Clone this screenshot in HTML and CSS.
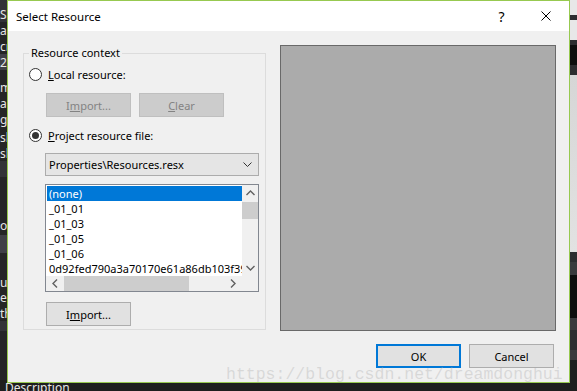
FILE: index.html
```html
<!DOCTYPE html>
<html lang="en">
<head>
  <meta charset="UTF-8">
  <meta name="viewport" content="width=device-width, initial-scale=1.0">
  <title>Select Resource</title>
  <link rel="stylesheet" href="styles.css">
</head>
<body>
  <div class="desktop">
    <!-- editor behind the dialog -->
    <div class="vs-left">
      <div class="vs-row shade" style="height: 6px"></div>
      <div class="vs-row shade" style="height: 16px">S</div>
      <div class="vs-row" style="height: 17px">al</div>
      <div class="vs-row" style="height: 15px">cr</div>
      <div class="vs-row hover" style="height: 16px">2</div>
      <div class="vs-row" style="height: 9px"></div>
      <div class="vs-row" style="height: 16px">m</div>
      <div class="vs-row" style="height: 16px">a</div>
      <div class="vs-row" style="height: 17px">g</div>
      <div class="vs-row" style="height: 18px">sk</div>
      <div class="vs-row" style="height: 15px">sk</div>
      <div class="vs-row shade" style="height: 16px"></div>
      <div class="vs-row" style="height: 40px"></div>
      <div class="vs-row" style="height: 16px">oi</div>
      <div class="vs-row" style="height: 2px"></div>
      <div class="vs-row hover" style="height: 18px"></div>
      <div class="vs-row" style="height: 21px"></div>
      <div class="vs-row" style="height: 16px">us</div>
      <div class="vs-row" style="height: 15px">e</div>
      <div class="vs-row" style="height: 16px">th</div>
      <div class="vs-row shade" style="height: 10px"></div>
    </div>
    <div class="vs-mid"></div>
    <div class="vs-right">
      <div class="band light" style="height: 15px"></div>
      <div class="band dark" style="height: 5px"></div>
      <div class="band light" style="height: 20px"></div>
      <div class="band dark" style="height: 5px"></div>
      <div class="band black" style="height: 20px"></div>
      <div class="band dark" style="height: 10px"></div>
      <div class="band pale" style="height: 177px"></div>
      <div class="band dark" style="height: 10px"></div>
      <div class="band grey" style="height: 13px"></div>
      <div class="band black" style="height: 43px"></div>
      <div class="band grey" style="height: 12px"></div>
      <div class="band dark" style="height: 20px"></div>
      <div class="band grey" style="height: 10px"></div>
    </div>
    <div class="vs-status">Description</div>

    <div class="dialog">
      <div class="titlebar">
        <span class="title">Select Resource</span>
        <span class="caption-btn help">?</span>
        <span class="caption-btn close">
          <svg width="10" height="10" viewBox="0 0 10 10"><path d="M0.5 0.5 L9.5 9.5 M9.5 0.5 L0.5 9.5" stroke="#000" stroke-width="1" fill="none"/></svg>
        </span>
      </div>

      <div class="dialog-body">
        <div class="main">
          <fieldset class="group">
            <legend>Resource context</legend>

            <div class="radio first">
              <span class="circle"></span>
              <span><u>L</u>ocal resource:</span>
            </div>
            <div class="btn-row">
              <button class="btn" disabled>I<u>m</u>port...</button>
              <button class="btn" disabled><u>C</u>lear</button>
            </div>

            <div class="radio checked">
              <span class="circle"></span>
              <span><u>P</u>roject resource file:</span>
            </div>
            <div class="combo">
              <span>Properties\Resources.resx</span>
              <svg width="9" height="6" viewBox="0 0 9 6"><path d="M0.5 0.5 L4.5 4.5 L8.5 0.5" stroke="#333" fill="none"/></svg>
            </div>

            <div class="listbox">
              <ul class="items">
                <li class="selected">(none)</li>
                <li>_01_01</li>
                <li>_01_03</li>
                <li>_01_05</li>
                <li>_01_06</li>
                <li>0d92fed790a3a70170e61a86db103f39</li>
              </ul>
              <div class="vscroll">
                <svg class="arrow" width="9" height="6" viewBox="0 0 9 6"><path d="M0.5 5 L4.5 1 L8.5 5" stroke="#606060" stroke-width="1.4" fill="none"/></svg>
                <div class="vthumb"></div>
                <svg class="arrow down" width="9" height="6" viewBox="0 0 9 6"><path d="M0.5 1 L4.5 5 L8.5 1" stroke="#606060" stroke-width="1.4" fill="none"/></svg>
              </div>
              <div class="hscroll">
                <svg class="arrow" width="6" height="9" viewBox="0 0 6 9"><path d="M5 0.5 L1 4.5 L5 8.5" stroke="#606060" stroke-width="1.4" fill="none"/></svg>
                <div class="hthumb"></div>
                <svg class="arrow right" width="6" height="9" viewBox="0 0 6 9"><path d="M1 0.5 L5 4.5 L1 8.5" stroke="#606060" stroke-width="1.4" fill="none"/></svg>
              </div>
              <div class="corner"></div>
            </div>

            <button class="btn import">I<u>m</u>port...</button>
          </fieldset>

          <div class="preview"></div>
        </div>

        <div class="footer">
          <button class="btn default">OK</button>
          <button class="btn">Cancel</button>
        </div>
      </div>
    </div>

    <div class="watermark">https://blog.csdn.net/dreamdonghui</div>
  </div>
</body>
</html>
```

FILE: styles.css
```css
* {
  box-sizing: border-box;
}
html, body {
  margin: 0;
  padding: 0;
}
body {
  background-color: #1e1e1e;
  font-family: "Noto Sans", "Segoe UI", sans-serif;
  font-size: 11px;
  color: #000;
  overflow: hidden;
}
u {
  text-decoration: underline;
  text-underline-offset: 1px;
}

/* editor backdrop */
.desktop {
  position: relative;
  width: 577px;
  height: 391px;
  display: grid;
  grid-template-columns: 7px 1fr 7px;
  grid-template-rows: 383px 8px;
}
.vs-left {
  background-color: #252526;
  color: #e6e6e6;
  overflow: hidden;
  white-space: nowrap;
  display: flex;
  flex-direction: column;
}
.vs-row {
  flex: none;
  display: flex;
  align-items: center;
  font-size: 12px;
}
.vs-row.shade {
  background-color: #333337;
}
.vs-row.hover {
  background-color: #3f3f46;
}
.vs-mid {
  background-color: #1e1e1e;
}
.vs-right {
  display: flex;
  flex-direction: column;
  background-color: #1e1e1e;
}
.band {
  flex: none;
}
.band.light {
  background-color: #e8e8e8;
}
.band.pale {
  background: linear-gradient(#d6d6d6, #e2e2e2);
}
.band.dark {
  background-color: #2d2d30;
}
.band.grey {
  background-color: #3a3a3d;
}
.band.black {
  background-color: #0e0e0e;
}
.vs-status {
  grid-column: 1 / 4;
  background-color: #1e1e1e;
  color: #e6e6e6;
  font-size: 12px;
  padding-left: 5px;
  line-height: 16px;
  margin-top: -3px;
  overflow: hidden;
}

/* dialog window */
.dialog {
  position: absolute;
  left: 7px;
  top: 0;
  width: 563px;
  height: 383px;
  border: 1px solid #97c950;
  background-color: #f0f0f0;
  display: flex;
  flex-direction: column;
  z-index: 1;
}
.titlebar {
  height: 30px;
  flex: none;
  background-color: #fff;
  display: flex;
  align-items: center;
  padding-left: 8px;
}
.title {
  font-size: 11.5px;
}
.caption-btn {
  width: 46px;
  height: 30px;
  display: flex;
  align-items: center;
  justify-content: center;
}
.help {
  margin-left: auto;
  font-size: 14px;
  padding-left: 3px;
}

.dialog-body {
  flex: 1;
  display: flex;
  flex-direction: column;
}
.main {
  display: flex;
  align-items: flex-start;
  gap: 14px;
  padding: 14px 0 0 15px;
}

.group {
  width: 243px;
  margin: 0;
  padding: 0 6px 3px 5px;
  border: 1px solid #dcdcdc;
  min-width: 0;
}
.group legend {
  padding: 0 2px;
  line-height: 16px;
}

.radio {
  display: flex;
  align-items: center;
  gap: 6px;
  height: 16px;
  margin-top: 10px;
}
.radio.first {
  margin-top: 5px;
}
.circle {
  width: 13px;
  height: 13px;
  border: 1px solid #333;
  border-radius: 50%;
  background-color: #fff;
  display: flex;
  align-items: center;
  justify-content: center;
}
.radio.checked .circle::after {
  content: "";
  width: 7px;
  height: 7px;
  border-radius: 50%;
  background-color: #333;
}

.btn {
  width: 85px;
  height: 24px;
  padding: 0;
  font-family: inherit;
  font-size: 11px;
  color: #000;
  background-color: #e1e1e1;
  border: 1px solid #adadad;
  border-radius: 0;
}
.btn:disabled {
  background-color: #cccccc;
  border-color: #bfbfbf;
  color: #838383;
}
.btn.default {
  border: 2px solid #0078d7;
}
.btn-row {
  display: flex;
  gap: 8px;
  margin: 11px 0 0 17px;
}

.combo {
  width: 214px;
  height: 23px;
  margin: 10px 0 0 16px;
  background-color: #e5e5e5;
  border: 1px solid #acacac;
  display: flex;
  align-items: center;
  justify-content: space-between;
  padding: 0 6px 0 3px;
}

.listbox {
  width: 214px;
  height: 108px;
  margin: 8px 0 0 16px;
  border: 1px solid #828790;
  background-color: #fff;
  display: grid;
  grid-template-columns: 1fr 16px;
  grid-template-rows: 1fr 15px;
}
.items {
  list-style: none;
  margin: 0;
  padding: 1px 0 0 1px;
  overflow: hidden;
  white-space: nowrap;
}
.items li {
  height: 15px;
  line-height: 15px;
  padding-left: 2px;
}
.items li.selected {
  background-color: #0078d7;
  color: #fff;
}
.vscroll {
  background-color: #f0f0f0;
  display: flex;
  flex-direction: column;
  align-items: center;
}
.vscroll .arrow {
  margin-top: 5px;
}
.vscroll .arrow.down {
  margin-top: auto;
  margin-bottom: 5px;
}
.vthumb {
  width: 100%;
  height: 17px;
  margin-top: 6px;
  background-color: #cdcdcd;
}
.hscroll {
  background-color: #f0f0f0;
  display: flex;
  align-items: center;
  padding: 0 6px;
}
.hthumb {
  width: 125px;
  height: 100%;
  margin-left: 6px;
  background-color: #cdcdcd;
}
.hscroll .arrow.right {
  margin-left: auto;
}
.corner {
  background-color: #f0f0f0;
}

.btn.import {
  display: block;
  margin: 10px 0 0 17px;
}

.preview {
  width: 276px;
  height: 286px;
  background-color: #ababab;
  border: 1px solid #696969;
}

.footer {
  display: flex;
  justify-content: flex-end;
  gap: 8px;
  padding: 13px 15px 0 0;
}

.watermark {
  position: absolute;
  left: 226px;
  top: 366px;
  font-family: "Liberation Mono", monospace;
  font-size: 16.5px;
  line-height: 18px;
  color: rgba(170, 170, 170, 0.35);
  white-space: nowrap;
  z-index: 2;
  pointer-events: none;
}
```
